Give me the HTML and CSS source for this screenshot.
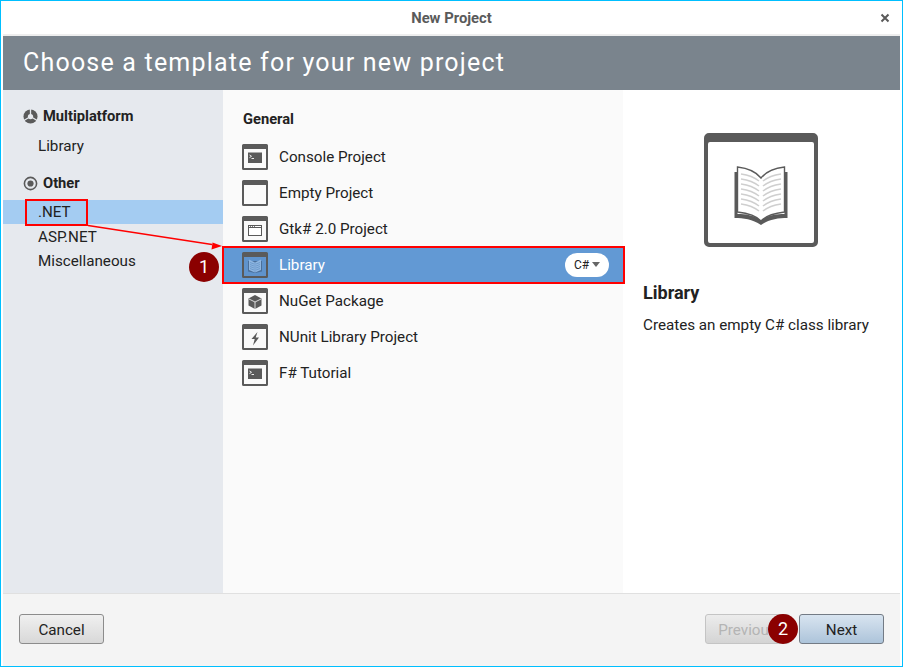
FILE: index.html
```html
<!DOCTYPE html>
<html lang="en">
<head>
<meta charset="utf-8">
<title>New Project</title>
<link rel="stylesheet" href="styles.css">
</head>
<body>
<svg class="defs" width="0" height="0" aria-hidden="true">
  <defs>
    <symbol id="frame" viewBox="0 0 26 26">
      <path fill="#5a5a5a" fill-rule="evenodd" d="M1.500 0h23A1.500 1.500 0 0 1 26 1.500v23a1.500 1.500 0 0 1-1.500 1.500h-23A1.500 1.500 0 0 1 0 24.500v-23A1.500 1.500 0 0 1 1.500 0zM2 5v19h22V5z"/>
    </symbol>
  </defs>
</svg>
<div class="window">
  <div class="titlebar">
    <span class="title">New Project</span>
    <svg class="close" width="10" height="10" viewBox="0 0 10 10"><path d="M1.500 1.500l7 7M8.500 1.500l-7 7" stroke="#5a5a5a" stroke-width="2"/></svg>
  </div>
  <div class="banner">Choose a template for your new project</div>
  <div class="main">
    <nav class="sidebar">
      <div class="cat cat-first">
        <svg class="cat-icon" width="15" height="15" viewBox="0 0 16 16"><circle cx="8" cy="8" r="7.500" fill="#5a5a5a"/><path d="M8 8V0M8 8l7.500 4.500M8 8l-7.500 4.500" stroke="#e6e9ee" stroke-width="1.400"/><circle cx="8" cy="8" r="2.800" fill="#e6e9ee"/></svg>
        <span>Multiplatform</span>
      </div>
      <div class="sub">Library</div>
      <div class="cat cat-second">
        <svg class="cat-icon" width="15" height="15" viewBox="0 0 16 16"><circle cx="8" cy="8" r="6.500" fill="none" stroke="#5a5a5a" stroke-width="1.700"/><circle cx="8" cy="8" r="3.300" fill="#5a5a5a"/></svg>
        <span>Other</span>
      </div>
      <div class="sub selected">.NET</div>
      <div class="sub low">ASP.NET</div>
      <div class="sub low">Miscellaneous</div>
    </nav>
    <section class="templates">
      <h2 class="group">General</h2>
      <div class="row">
        <svg class="ticon" viewBox="0 0 26 26"><rect x="1" y="3" width="24" height="22" fill="#fafafa"/><use href="#frame"/><rect x="6" y="8.500" width="14" height="10.500" fill="#5a5a5a"/><path d="M7.500 11l2 1.300-2 1.300" fill="none" stroke="#fff" stroke-width=".9"/><path d="M9.500 14.500h2.500" stroke="#fff" stroke-width=".9"/></svg>
        <span>Console Project</span>
      </div>
      <div class="row">
        <svg class="ticon" viewBox="0 0 26 26"><rect x="1" y="3" width="24" height="22" fill="#fafafa"/><use href="#frame"/></svg>
        <span>Empty Project</span>
      </div>
      <div class="row">
        <svg class="ticon" viewBox="0 0 26 26"><rect x="1" y="3" width="24" height="22" fill="#fafafa"/><use href="#frame"/><rect x="6.500" y="9.500" width="13" height="10" fill="#fff" stroke="#5a5a5a"/><path d="M6.500 11.500h13" stroke="#5a5a5a"/><path d="M8 10.500h1M10 10.500h1M12 10.500h1" stroke="#5a5a5a" stroke-width=".8"/></svg>
        <span>Gtk# 2.0 Project</span>
      </div>
      <div class="row active">
        <svg class="ticon" viewBox="0 0 26 26"><rect x="1" y="3" width="24" height="22" fill="#5f93cc"/><use href="#frame"/><path d="M6 9v10.500l7 1.500 7-1.500V9z" fill="#4a6f9a"/><path d="M7 7.500l6 3 6-3V18l-6 2.500L7 18z" fill="#8fb6e0"/><path d="M13 10.500v10M8 10.500l4 1.500M8 12.500l4 1.500M8 14.500l4 1.500M8 16.500l4 1.500M14 12l4-1.500M14 14l4-1.500M14 16l4-1.500M14 18l4-1.500" stroke="#5f8fc4" stroke-width=".7"/></svg>
        <span>Library</span>
        <span class="pill">C#<i class="caret"></i></span>
      </div>
      <div class="row">
        <svg class="ticon" viewBox="0 0 26 26"><rect x="1" y="3" width="24" height="22" fill="#fafafa"/><use href="#frame"/><path d="M13 7l6.500 3.400v7.200L13 21l-6.500-3.400v-7.200z" fill="#5a5a5a"/><path d="M7 11l6 3 6-3M13 14v7" fill="none" stroke="#fafafa" stroke-width=".8"/></svg>
        <span>NuGet Package</span>
      </div>
      <div class="row">
        <svg class="ticon" viewBox="0 0 26 26"><rect x="1" y="3" width="24" height="22" fill="#fafafa"/><use href="#frame"/><path d="M15.500 8L9.500 15h3.200L11 21.500l6-8h-3.300z" fill="#5a5a5a"/></svg>
        <span>NUnit Library Project</span>
      </div>
      <div class="row">
        <svg class="ticon" viewBox="0 0 26 26"><rect x="1" y="3" width="24" height="22" fill="#fafafa"/><use href="#frame"/><rect x="6" y="8.500" width="14" height="10.500" fill="#5a5a5a"/><path d="M7.500 11l2 1.300-2 1.300" fill="none" stroke="#fff" stroke-width=".9"/><path d="M9.500 14.500h2.500" stroke="#fff" stroke-width=".9"/></svg>
        <span>F# Tutorial</span>
      </div>
    </section>
    <aside class="details">
      <svg class="preview" width="114" height="114" viewBox="0 0 114 114">
        <path fill="#5a5a5a" fill-rule="evenodd" d="M5 0h104a5 5 0 0 1 5 5v104a5 5 0 0 1-5 5H5a5 5 0 0 1-5-5V5a5 5 0 0 1 5-5zM6 9a2 2 0 0 0-2 2v97a2 2 0 0 0 2 2h102a2 2 0 0 0 2-2V11a2 2 0 0 0-2-2z"/>
        <path fill="#5a5a5a" d="M30.500 39h3v42c8 0 16 1 23.500 6 7.500-5 15.500-6 23.500-6V39h3v46c-9 0-18 1-26.500 7-8.500-6-17.500-7-26.500-7z"/>
        <path fill="#fff" stroke="#5a5a5a" stroke-width="1.400" d="M33.500 34c9 1 18 4 23.500 11 5.500-7 14.500-10 23.500-11v45c-9 1-18 3-23.500 9-5.500-6-14.500-8-23.500-9z"/>
        <path stroke="#cfcfcf" stroke-width="1.600" fill="none" d="M37 41c7 1 13 3 18 7M37 46c7 1 13 3 18 7M37 51c7 1 13 3 18 7M37 56c7 1 13 3 18 7M37 61c7 1 13 3 18 7M37 66c7 1 13 3 18 7M37 71c7 1 13 3 18 7M77 41c-7 1-13 3-18 7M77 46c-7 1-13 3-18 7M77 51c-7 1-13 3-18 7M77 56c-7 1-13 3-18 7M77 61c-7 1-13 3-18 7M77 66c-7 1-13 3-18 7M77 71c-7 1-13 3-18 7"/>
      </svg>
      <h3 class="detail-title">Library</h3>
      <p class="detail-text">Creates an empty C# class library</p>
    </aside>
  </div>
  <div class="footer">
    <button class="btn" type="button">Cancel</button>
    <div class="nav-buttons">
      <button class="btn disabled" type="button">Previous</button>
      <button class="btn primary" type="button">Next</button>
    </div>
  </div>
  <div class="mark mark-net"></div>
  <div class="mark mark-lib"></div>
  <svg class="arrow" width="903" height="667" viewBox="0 0 903 667">
    <path d="M88 225.500L212 244.500" stroke="#f00" stroke-width="1.300"/>
    <path d="M222 246l-10.500 3.500 1-7z" fill="#f00"/>
  </svg>
  <div class="badge badge-one">1</div>
  <div class="badge badge-two">2</div>
</div>
</body>
</html>
```
FILE: styles.css
```css
* { box-sizing: border-box; }
html, body { margin: 0; padding: 0; }
body { width: 903px; height: 667px; overflow: hidden; background: #fff; font-family: Roboto, "Liberation Sans", sans-serif; color: #222; }
.defs { position: absolute; }
.window { position: relative; width: 903px; height: 667px; border: 1px solid #00bfff; padding: 0 2px; display: flex; flex-direction: column; background: #fff; }
.titlebar { height: 35px; flex: none; display: flex; align-items: center; justify-content: center; position: relative; border-bottom: 2px solid #eeeeee; }
.title { font-size: 14.8px; font-weight: 700; color: #5a5a5a; }
.close { position: absolute; right: 10px; top: 12px; }
.banner { height: 54px; flex: none; background: #7a848d; color: #fff; font-size: 25px; line-height: 54px; padding-left: 20px; letter-spacing: 1.2px; }
.main { flex: 1; display: flex; min-height: 0; }
.sidebar { width: 220px; flex: none; background: #e6e9ee; font-size: 15.2px; }
.cat { display: flex; align-items: center; gap: 5px; padding-left: 20px; font-weight: 700; font-size: 14.7px; height: 24px; }
.cat-first { margin-top: 14px; }
.cat-second { margin-top: 13px; }
.cat-icon { flex: none; }
.sub { height: 24px; line-height: 24px; padding: 0 0 0 35px; }
.sub.low { padding-top: 1px; }
.cat + .sub { margin-top: 6px; }
.cat-second + .sub { margin-top: 5px; }
.selected { background: #a4ccf2; }
.templates { width: 400px; flex: none; background: #fafafa; font-size: 15.2px; padding-top: 17px; }
.group { margin: 0 0 8px; height: 24px; line-height: 24px; font-size: 14.7px; font-weight: 700; padding-left: 20px; }
.row { height: 36px; display: flex; align-items: center; gap: 11px; padding: 0 14px 0 19px; }
.ticon { width: 26px; height: 26px; flex: none; }
.row.active { background: #6299d4; color: #fff; }
.pill { margin-left: auto; width: 44px; height: 24px; border-radius: 12px; background: #fff; color: #222; font-size: 12px; display: flex; align-items: center; justify-content: center; gap: 3px; }
.caret { width: 0; height: 0; border-left: 4px solid transparent; border-right: 4px solid transparent; border-top: 5px solid #666; margin-top: -2px; }
.details { flex: 1; background: #fff; padding: 43px 20px 0; }
.preview { display: block; margin-left: 61px; }
.detail-title { margin: 34px 0 0; height: 24px; line-height: 24px; font-size: 18px; font-weight: 700; }
.detail-text { margin: 8px 0 0; font-size: 15.2px; line-height: 24px; }
.footer { height: 73px; flex: none; border-top: 1px solid #e0e0e0; background: #f4f4f4; display: flex; justify-content: space-between; padding: 20px 16px 0; }
.nav-buttons { display: flex; gap: 9px; }
.btn { width: 85px; height: 30px; border: 1px solid #8c8c8c; border-radius: 3px; background: linear-gradient(#f0f0f0, #d8d8d8); font: 15.2px Roboto, "Liberation Sans", sans-serif; color: #222; padding: 1px 0 0; }
.btn.disabled { color: #b4b4b4; border-color: #c4c4c4; background: linear-gradient(#ececec, #d4d4d4); }
.btn.primary { border-color: #737b85; background: linear-gradient(#d8e4f0, #adc4da); }
.mark { position: absolute; border: 2px solid #f00; pointer-events: none; }
.mark-net { left: 24px; top: 198px; width: 63px; height: 27px; }
.mark-lib { left: 221px; top: 245px; width: 403px; height: 38px; }
.arrow { position: absolute; left: -1px; top: -1px; pointer-events: none; }
.badge { position: absolute; width: 30px; height: 30px; border-radius: 50%; background: #8b0000; color: #fff; font-size: 18px; line-height: 30px; text-align: center; }
.badge-one { left: 188px; top: 251px; }
.badge-two { left: 767px; top: 613px; }
```
